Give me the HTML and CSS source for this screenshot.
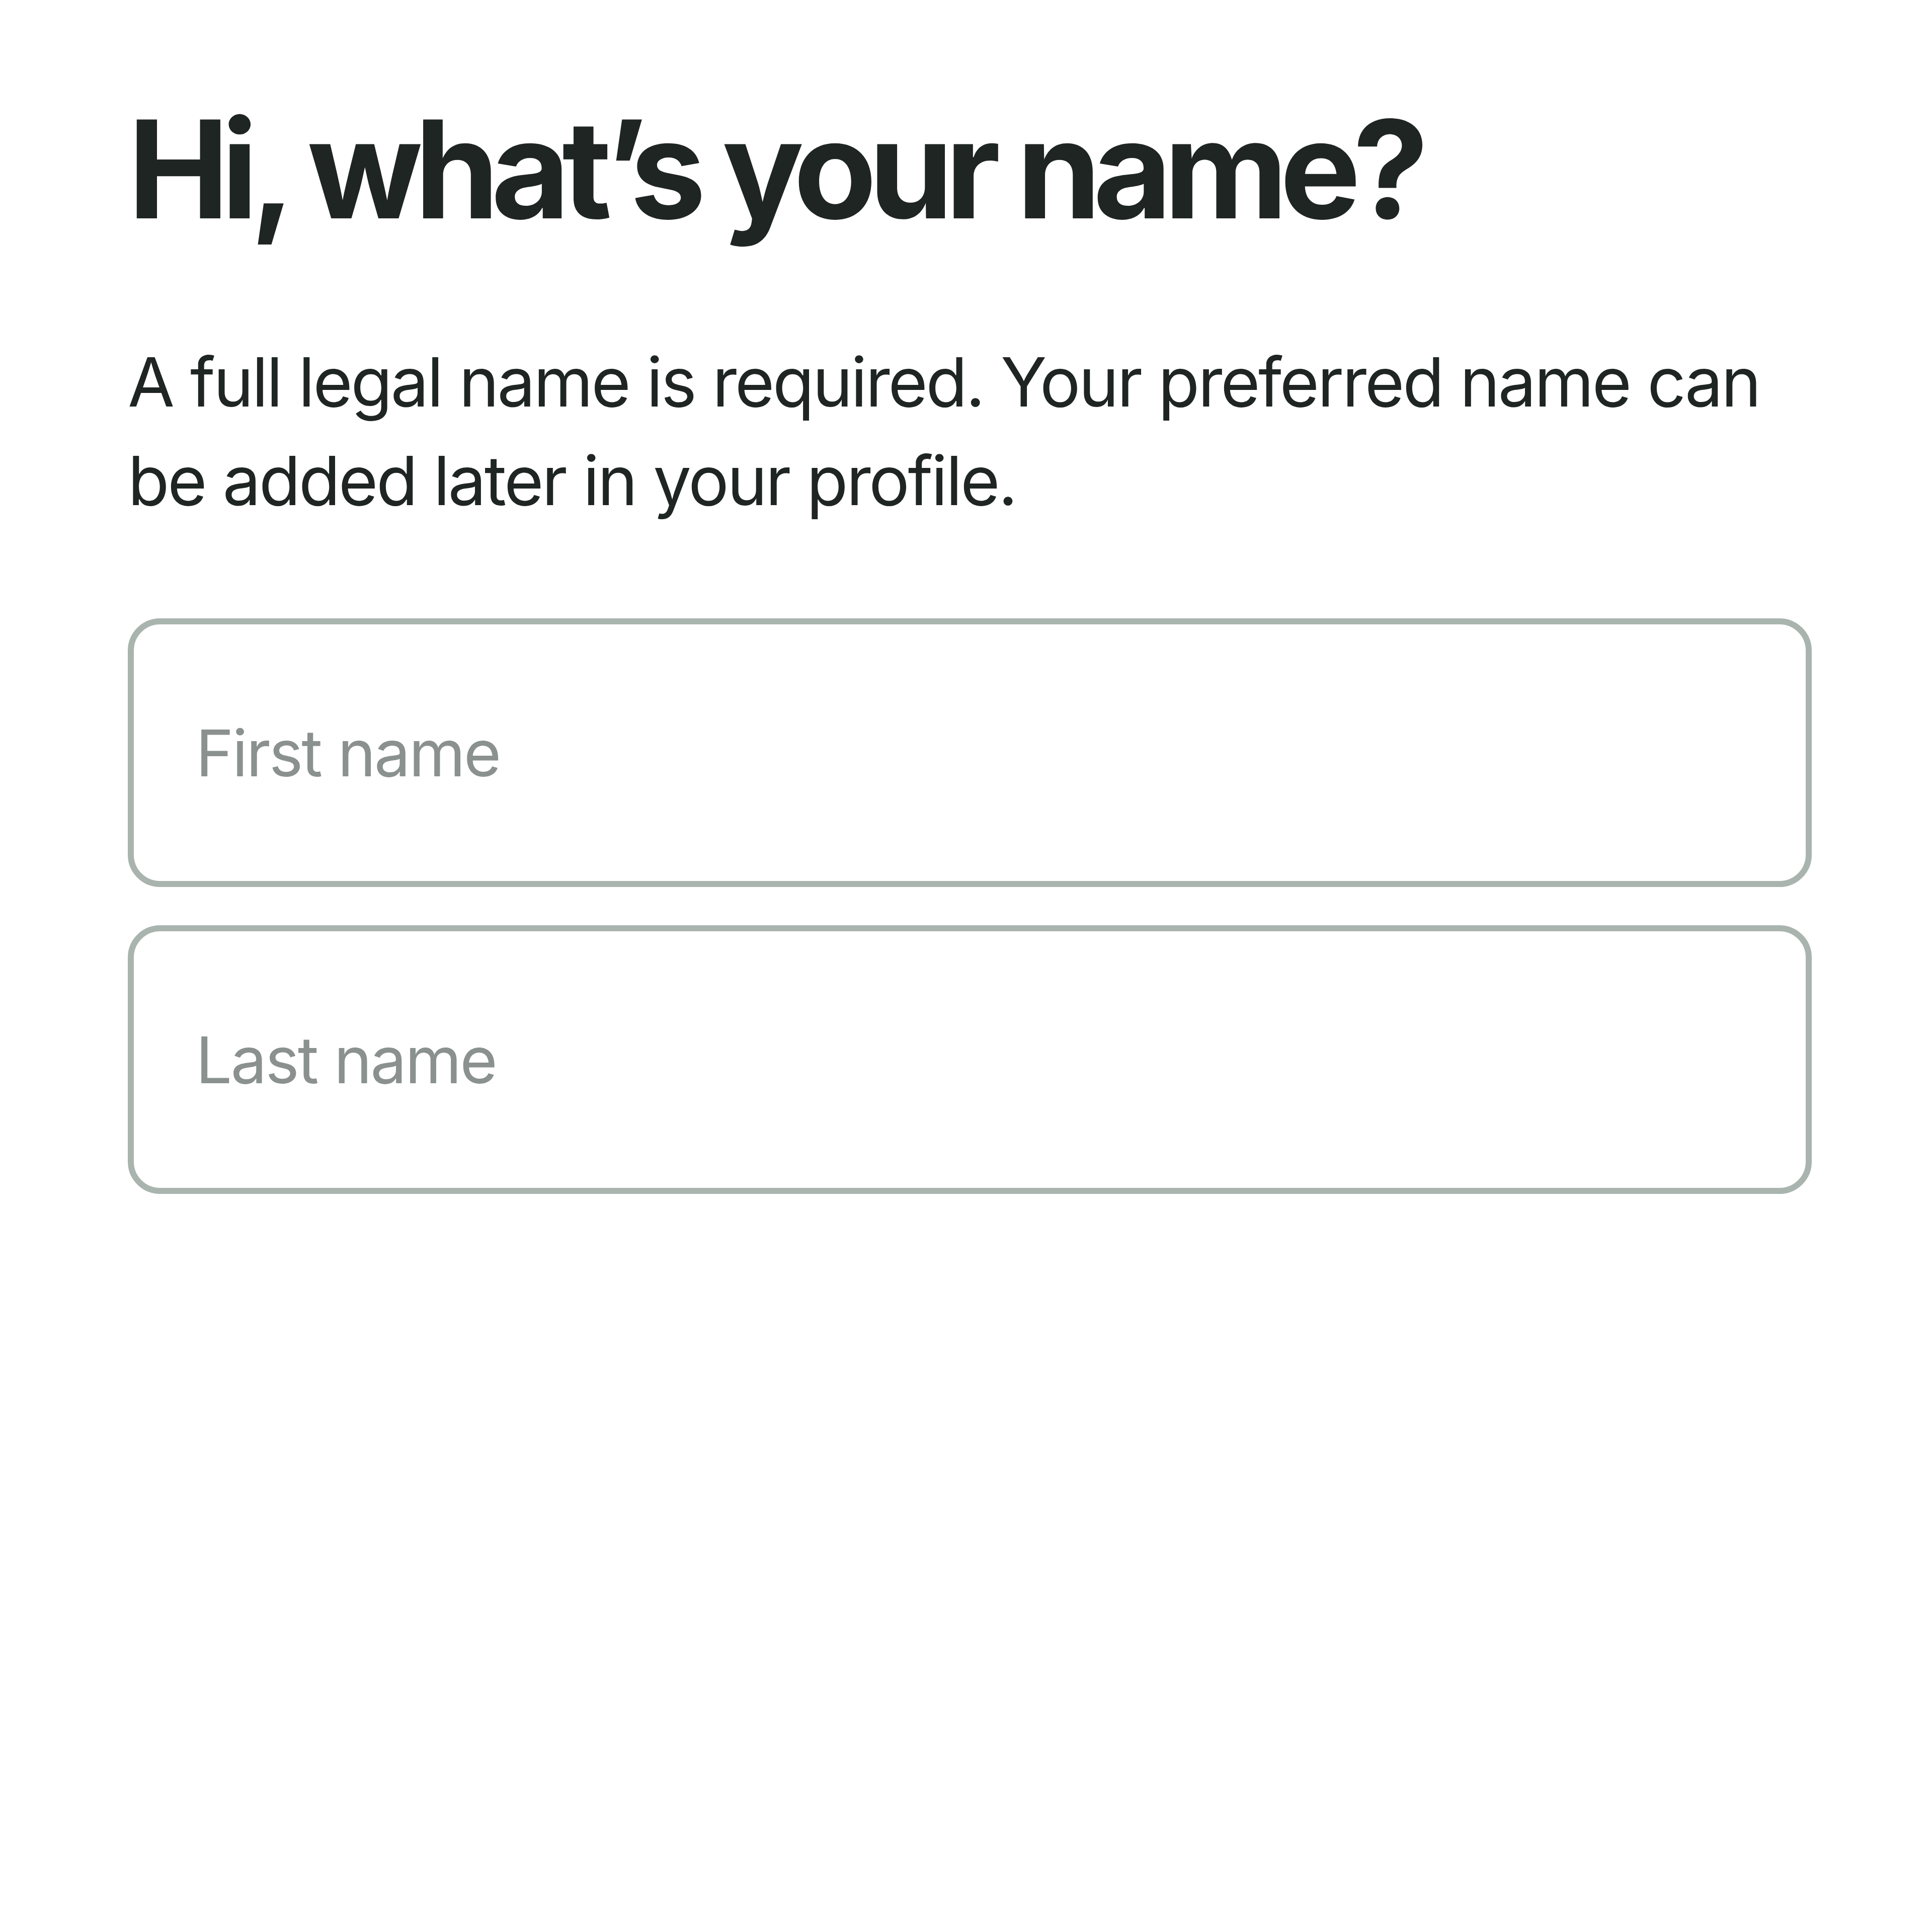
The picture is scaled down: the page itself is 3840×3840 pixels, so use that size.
FILE: index.html
```html
<!DOCTYPE html>
<html lang="en">
<head>
<meta charset="utf-8">
<title>Hi, what's your name?</title>
<link rel="stylesheet" href="styles.css">
</head>
<body>
<main class="page">
  <h1 class="title">Hi, what’s your name?</h1>
  <p class="lead">A full legal name is required. Your preferred name can be added later in your profile.</p>
  <form class="fields">
    <input class="field" type="text" placeholder="First name">
    <input class="field" type="text" placeholder="Last name">
  </form>
</main>
</body>
</html>
```

FILE: styles.css
```css
html, body {
  margin: 0;
  padding: 0;
  background: #ffffff;
}

.page {
  width: 3347px;
  padding: 174px 0 0 254px;
  font-family: Inter, "Liberation Sans", sans-serif;
  color: #1f2523;
}

.title {
  margin: 0;
  font-size: 270px;
  line-height: 324px;
  font-weight: 700;
  letter-spacing: -16px;
}

.lead {
  margin: 163px 0 0 0;
  font-size: 135px;
  line-height: 196px;
  font-weight: 400;
  letter-spacing: -3.6px;
}

.fields {
  margin-top: 176px;
  display: flex;
  flex-direction: column;
  gap: 76px;
}

.field {
  box-sizing: border-box;
  width: 100%;
  height: 534px;
  border: 12px solid #a9b4af;
  border-radius: 64px;
  padding: 0 0 0 123px;
  background: #ffffff;
  font-family: Inter, "Liberation Sans", sans-serif;
  font-size: 128px;
  letter-spacing: -3px;
  color: #1f2523;
  outline: none;
}

.field::placeholder {
  color: #8a918e;
  opacity: 1;
}
```
